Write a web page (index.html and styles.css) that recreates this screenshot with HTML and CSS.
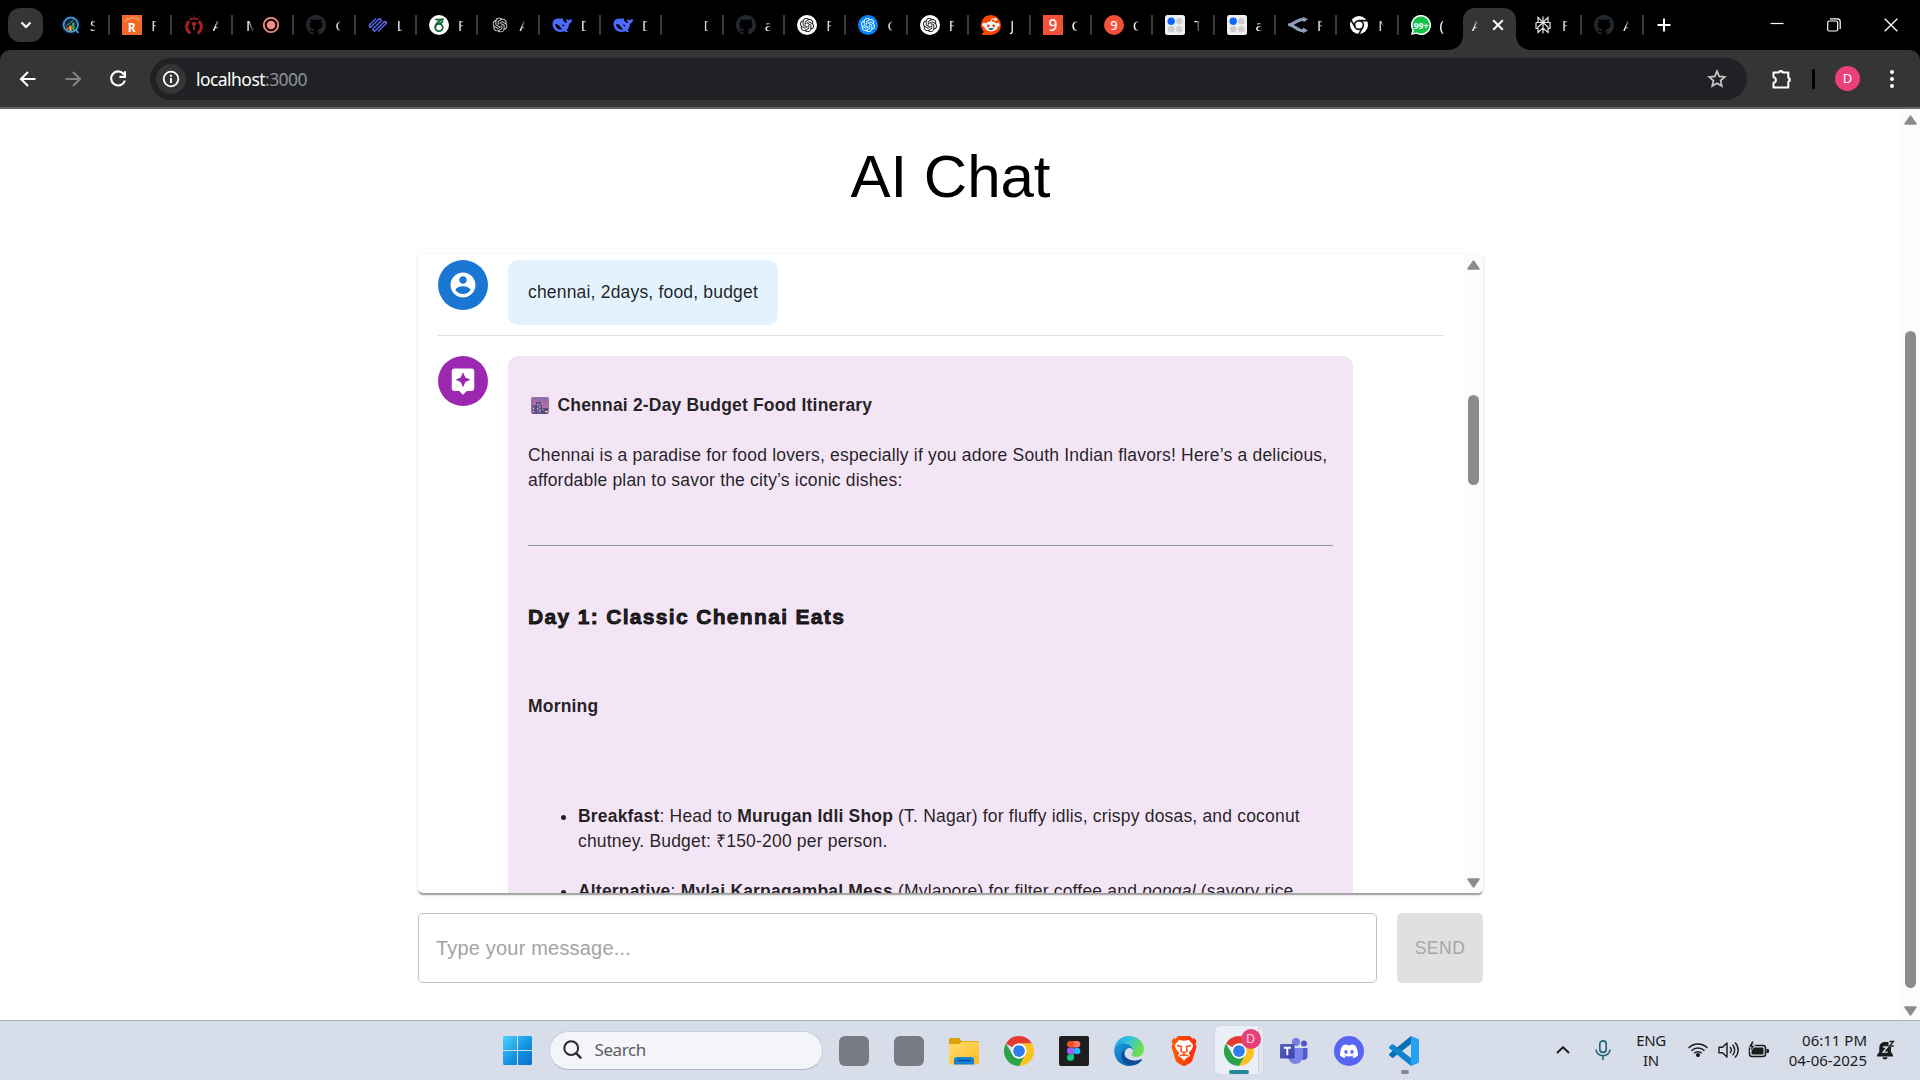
FILE: index.html
```html
<!DOCTYPE html>
<html lang="en">
<head>
<meta charset="utf-8">
<title>AI Chat</title>
<link rel="stylesheet" href="styles.css">
</head>
<body>
<svg class="defs" width="0" height="0">
  <defs>
    <linearGradient id="win" x1="0" y1="0" x2="1" y2="1"><stop offset="0" stop-color="#4cd2ff"/><stop offset=".55" stop-color="#1593e0"/><stop offset="1" stop-color="#0a6fd0"/></linearGradient>
    <linearGradient id="folder" x1="0" y1="0" x2="1" y2="1"><stop offset="0" stop-color="#ffdc6e"/><stop offset="1" stop-color="#fbbd22"/></linearGradient>
    <linearGradient id="edgeTop" x1="0" y1="0" x2="1" y2=".4"><stop offset="0" stop-color="#1f9fe8"/><stop offset=".5" stop-color="#33c3dc"/><stop offset="1" stop-color="#6ee04a"/></linearGradient>
    <linearGradient id="edgeLow" x1="0" y1="0" x2="1" y2="1"><stop offset="0" stop-color="#1b9de2"/><stop offset="1" stop-color="#0c4f9c"/></linearGradient>
    <linearGradient id="brave" x1="0" y1="0" x2="1" y2="0"><stop offset="0" stop-color="#ff5b00"/><stop offset="1" stop-color="#ff2a0a"/></linearGradient>
    <linearGradient id="teams" x1="0" y1="0" x2="1" y2="1"><stop offset="0" stop-color="#5a62c3"/><stop offset="1" stop-color="#3940ab"/></linearGradient>
    <linearGradient id="dusk" x1="0" y1="0" x2="0" y2="1"><stop offset="0" stop-color="#8f6dab"/><stop offset="1" stop-color="#c96f9f"/></linearGradient>
  </defs>
  <symbol id="github" viewBox="0 0 16 16"><path fill="#24292f" d="M8 0C3.58 0 0 3.58 0 8c0 3.54 2.29 6.53 5.47 7.59.4.07.55-.17.55-.38 0-.19-.01-.82-.01-1.49-2.01.37-2.53-.49-2.69-.94-.09-.23-.48-.94-.82-1.13-.28-.15-.68-.52-.01-.53.63-.01 1.08.58 1.23.82.72 1.21 1.87.87 2.33.66.07-.52.28-.87.51-1.07-1.78-.2-3.64-.89-3.64-3.95 0-.87.31-1.59.82-2.15-.08-.2-.36-1.02.08-2.12 0 0 .67-.21 2.2.82.64-.18 1.32-.27 2-.27s1.36.09 2 .27c1.53-1.04 2.2-.82 2.2-.82.44 1.1.16 1.92.08 2.12.51.56.82 1.27.82 2.15 0 3.07-1.87 3.75-3.65 3.95.29.25.54.73.54 1.48 0 1.07-.01 1.93-.01 2.2 0 .21.15.46.55.38A8.01 8.01 0 0016 8c0-4.42-3.58-8-8-8z"/></symbol>
  <symbol id="openai" viewBox="0 0 24 24"><path fill="currentColor" d="M22.2819 9.8211a5.9847 5.9847 0 0 0-.5157-4.9108 6.0462 6.0462 0 0 0-6.5098-2.9A6.0651 6.0651 0 0 0 4.9807 4.1818a5.9847 5.9847 0 0 0-3.9977 2.9 6.0462 6.0462 0 0 0 .7427 7.0966 5.98 5.98 0 0 0 .511 4.9107 6.051 6.051 0 0 0 6.5146 2.9001A5.9847 5.9847 0 0 0 13.2599 24a6.0557 6.0557 0 0 0 5.7718-4.2058 5.9894 5.9894 0 0 0 3.9977-2.9001 6.0557 6.0557 0 0 0-.7475-7.0729zm-9.022 12.6081a4.4755 4.4755 0 0 1-2.8764-1.0408l.1419-.0804 4.7783-2.7582a.7948.7948 0 0 0 .3927-.6813v-6.7369l2.02 1.1686a.071.071 0 0 1 .038.052v5.5826a4.504 4.504 0 0 1-4.4945 4.4944zm-9.6607-4.1254a4.4708 4.4708 0 0 1-.5346-3.0137l.142.0852 4.783 2.7582a.7712.7712 0 0 0 .7806 0l5.8428-3.3685v2.3324a.0804.0804 0 0 1-.0332.0615L9.74 19.9502a4.4992 4.4992 0 0 1-6.1408-1.6464zM2.3408 7.8956a4.485 4.485 0 0 1 2.3655-1.9728V11.6a.7664.7664 0 0 0 .3879.6765l5.8144 3.3543-2.0201 1.1685a.0757.0757 0 0 1-.071 0l-4.8303-2.7865A4.504 4.504 0 0 1 2.3408 7.872zm16.5963 3.8558L13.1038 8.364 15.1192 7.2a.0757.0757 0 0 1 .071 0l4.8303 2.7913a4.4944 4.4944 0 0 1-.6765 8.1042v-5.6772a.79.79 0 0 0-.407-.667zm2.0107-3.0231l-.142-.0852-4.7735-2.7818a.7759.7759 0 0 0-.7854 0L9.409 9.2297V6.8974a.0662.0662 0 0 1 .0284-.0615l4.8303-2.7866a4.4992 4.4992 0 0 1 6.6802 4.66zM8.3065 12.863l-2.02-1.1638a.0804.0804 0 0 1-.038-.0567V6.0742a4.4992 4.4992 0 0 1 7.3757-3.4537l-.142.0805L8.704 5.459a.7948.7948 0 0 0-.3927.6813zm1.0976-2.3654l2.602-1.4998 2.6069 1.4998v2.9994l-2.5974 1.4997-2.6067-1.4997Z"/></symbol>
  <symbol id="deepseek" viewBox="0 0 20 20"><path fill="#4d6bfe" d="M1 6.5C2 4 5 3.300 8 3.700c1.200.1 2-.9 3-.3-.6 1.600.5 2.400 1.700 3.600.9 1 1.800 1.500 2.200.2-.6-1.400-1-2.200-.6-3.300.9.700 1.500 1.300 2.600 1.200 1.100-.1 2-.9 3.100-.7-.1 1.800-.7 3.300-2.400 4-.7.500-.5 1.500-.8 2.600-.4 1.700-1.200 3-2.300 4.200.6.700 1 1 1.700 1.200-1.500.9-2.700.7-4-.1-4 1.700-8.500.7-10.600-3C.4 11.200.2 8.700 1 6.500z"/><path fill="#000" d="M3.200 9c2-.3 3.500.9 4.700 2.800.8 1.200 1.500 2 2.500 2.600-3.700.6-6.900-1.200-7.200-5.400zM10 9.200c1.400.1 2.400 1.100 2.200 2.600-1-.3-1.900-1.100-2.200-2.600z"/></symbol>
  <symbol id="dots" viewBox="0 0 20 20"><rect width="20" height="20" rx="2.500" fill="#f1f0f0"/><circle cx="6.200" cy="6.200" r="3.700" fill="#0d66ff"/><circle cx="14.300" cy="6.200" r="3.300" fill="#d0cfcf"/><circle cx="6.200" cy="14.300" r="3.300" fill="#d0cfcf"/><circle cx="14.300" cy="14.300" r="3.300" fill="#d0cfcf"/></symbol>
  <symbol id="chrome" viewBox="0 0 48 48"><path fill="#e33b2e" d="M24 0a24 24 0 0 1 20.800 12H24a12 12 0 0 0-10.400 6L3.200 12A24 24 0 0 1 24 0z"/><path fill="#fcc31e" d="M44.800 12A24 24 0 0 1 24 48l10.400-18A12 12 0 0 0 34.400 18 12 12 0 0 0 24 12z"/><path fill="#2da24c" d="M3.200 12A24 24 0 0 0 24 48l10.400-18a12 12 0 0 1-20.800 0z"/><circle cx="24" cy="24" r="12" fill="#fff"/><circle cx="24" cy="24" r="9.400" fill="#2f7de9"/></symbol>
  <symbol id="up" viewBox="0 0 13 10"><path d="M6.500 1.200 11.800 8.800H1.200z" fill="#8b8b8b" stroke="#8b8b8b" stroke-width="1.800" stroke-linejoin="round"/></symbol>
</svg>

<header class="tabstrip">
  <button class="tab-search"><svg width="12" height="8" viewBox="0 0 12 8"><path d="M1.500 1.500 6 6l4.500-4.500" fill="none" stroke="#fff" stroke-width="2.200"/></svg></button>
  <nav class="tabs">
    <div class="tab"><svg class="fav" viewBox="0 0 20 20"><circle cx="10" cy="10" r="10" fill="#04122c"/><circle cx="9.800" cy="9.800" r="7.200" fill="#0b2547" stroke="#4fa8dd" stroke-width="1.500"/><path d="M14.500 14.500 17.500 18" stroke="#4fa8dd" stroke-width="1.600"/><path fill="#e2482d" d="M5.500 12h2.300v3.500H5.500z"/><path fill="#f2b53a" d="M8.300 10.500h2.300V16H8.300z"/><path fill="#3fae4e" d="M11.200 7.500h2.300v7.500h-2.300z"/><path d="M5 11 12.500 5" stroke="#8fd36a" stroke-width=".7"/></svg><span class="ttl">S</span></div>
    <div class="tab"><svg class="fav" viewBox="0 0 20 20"><rect width="20" height="20" fill="#f26a25"/><path d="M3 6.500C6 3.500 9 2.800 11 2.800S15 3 18 6" fill="none" stroke="#f9ba94" stroke-width="2" stroke-dasharray=".8 .9"/><text x="9.700" y="16.500" font-family="Open Sans, sans-serif" font-weight="700" font-size="12" text-anchor="middle" fill="#fff">R</text></svg><span class="ttl">F</span></div>
    <div class="tab"><svg class="fav" viewBox="0 0 20 20" fill="none" stroke="#a9201f"><path d="M6.500 18.200C1.800 16 1.300 9 5.500 6.200M13.500 18.200c4.700-2.200 5.200-9.200 1-12" stroke-width="2.800"/><path d="M10 9v6" stroke-width="1.800"/><circle cx="10" cy="9" r="1.800" fill="#b32624"/><path d="M6 4.500C8.500 3.200 11.500 3.200 14 4.500" stroke-width="1.500"/><path d="M10 0v2.500M5 1.500l1 2M15 1.500l-1 2M1 6l2 1.500M19 6l-2 1.500M0 12h2M20 12h-2" stroke="#671413"/></svg><span class="ttl">A</span></div>
    <div class="tab tab-rec"><span class="ttl">M</span><svg class="fav" viewBox="0 0 20 20"><circle cx="10" cy="10" r="7.200" fill="none" stroke="#f28b82" stroke-width="1.800"/><circle cx="10" cy="10" r="4.300" fill="#f28b82"/></svg></div>
    <div class="tab"><svg class="fav"><use href="#github"/></svg><span class="ttl">G</span></div>
    <div class="tab"><svg class="fav" viewBox="0 0 20 20" fill="none" stroke="#4b5fd6" stroke-width="1.700" stroke-linecap="round"><path d="M2 9.500 7.500 4M2.500 12.500 10.500 4.500M5 14 13 6M7.500 15.500 15.500 7.500M10.500 16 18 8.500"/><path d="M2 9.500c-1 1-.3 2.500.8 2.700M10.500 4.500c1-1.500 3-.5 2.500 1.500M15.500 7.500c1.500-1.500 3.800-.5 2.500 1M5 14c0 1.800 1.500 2.500 2.500 1.500" stroke="#5b62cc"/></svg><span class="ttl">L</span></div>
    <div class="tab"><svg class="fav" viewBox="0 0 20 20"><circle cx="10" cy="10" r="10" fill="#fff"/><g fill="none" stroke="#13693c" stroke-width="1.800" stroke-linecap="round"><ellipse cx="10" cy="12.500" rx="3.700" ry="3.600"/><path d="M6.300 12.500C6.300 8.500 9 6 14 4.500M7 4.600c2.200 0 4 .4 7-.4M9.500 8.300c2 .2 3.400-.5 4-1.500"/></g></svg><span class="ttl">F</span></div>
    <div class="tab"><svg class="fav ai-plain" viewBox="-4 -4 32 32"><use href="#openai" width="24" height="24"/></svg><span class="ttl">A</span></div>
    <div class="tab"><svg class="fav"><use href="#deepseek"/></svg><span class="ttl">D</span></div>
    <div class="tab"><svg class="fav"><use href="#deepseek"/></svg><span class="ttl">D</span></div>
    <div class="tab"><span class="fav"></span><span class="ttl">D</span></div>
    <div class="tab"><svg class="fav"><use href="#github"/></svg><span class="ttl">a</span></div>
    <div class="tab"><svg class="fav ai-white" viewBox="-5 -5 34 34"><use href="#openai" width="24" height="24"/></svg><span class="ttl">F</span></div>
    <div class="tab"><svg class="fav ai-blue" viewBox="-5 -5 34 34"><use href="#openai" width="24" height="24"/></svg><span class="ttl">C</span></div>
    <div class="tab"><svg class="fav ai-white" viewBox="-5 -5 34 34"><use href="#openai" width="24" height="24"/></svg><span class="ttl">F</span></div>
    <div class="tab"><svg class="fav" viewBox="0 0 20 20"><path fill="#ff4500" d="M10 0a10 10 0 1 1 0 20H1.300c-.6 0-.8-.6-.4-1l2-2A10 10 0 0 1 10 0z"/><path d="M10 7 11 3.800l3 .6" stroke="#fff" stroke-width="1" fill="none"/><circle cx="14.600" cy="4.400" r="1.500" fill="#fff"/><circle cx="3.300" cy="9.800" r="2" fill="#fff"/><circle cx="16.700" cy="9.800" r="2" fill="#fff"/><ellipse cx="10" cy="11.500" rx="6.700" ry="5" fill="#f1f7fa"/><circle cx="7.300" cy="10.800" r="1.400" fill="#e8401a"/><circle cx="12.700" cy="10.800" r="1.400" fill="#e8401a"/><path d="M7.300 13.300h5.400c-.4 2.300-5 2.300-5.400 0z" fill="#263238"/></svg><span class="ttl">J</span></div>
    <div class="tab"><svg class="fav" viewBox="0 0 20 20"><rect width="20" height="20" fill="#f5503a"/><text x="10" y="16" font-family="Noto Sans, sans-serif" font-size="15.500" font-weight="500" text-anchor="middle" fill="#fff">9</text></svg><span class="ttl">C</span></div>
    <div class="tab"><svg class="fav" viewBox="0 0 20 20"><circle cx="10" cy="10" r="10" fill="#f5503a"/><text x="10" y="14.800" font-family="Noto Sans, sans-serif" font-size="13" font-weight="500" text-anchor="middle" fill="#fff">9</text></svg><span class="ttl">C</span></div>
    <div class="tab"><svg class="fav"><use href="#dots"/></svg><span class="ttl">T</span></div>
    <div class="tab"><svg class="fav"><use href="#dots"/></svg><span class="ttl">a</span></div>
    <div class="tab"><svg class="fav" viewBox="0 0 20 20" fill="none" stroke="#8d9db8" stroke-width="3.200"><path d="M16.500 4.500C11 3 7.500 8.300 2 9.700 7.500 11.500 11 17 16.500 15.500"/><path d="m15 1.800 5 2.400-4.500 3zM15 12.500l5 3-5 2.700z" fill="#8d9db8" stroke="none"/></svg><span class="ttl">F</span></div>
    <div class="tab"><svg class="fav" viewBox="0 0 20 20"><circle cx="10" cy="10" r="9" fill="#fff"/><circle cx="10" cy="10" r="4.400" fill="none" stroke="#111" stroke-width="1.600"/><path d="M10 5.600h8.500M6.200 12.200 2 5M13.800 12.200 9.700 19.500" stroke="#111" stroke-width="1.600"/></svg><span class="ttl">N</span></div>
    <div class="tab"><svg class="fav" viewBox="0 0 20 20"><path fill="#fff" d="M10 0a10 10 0 1 1-4.700 18.800L0 20l1.300-5A10 10 0 0 1 10 0z"/><path fill="#12c34a" d="M10 1.600a8.500 8.500 0 1 1-4.500 15.700L2 18.200l1-3.300A8.500 8.500 0 0 1 10 1.600z"/><text x="10" y="13.700" font-family="Open Sans, sans-serif" font-size="9.500" font-weight="700" text-anchor="middle" textLength="14.500" lengthAdjust="spacingAndGlyphs" fill="#fff">99+</text></svg><span class="ttl">(</span></div>
    <div class="tab tab-active"><span class="ttl">A</span><svg width="12" height="12" viewBox="0 0 12 12"><path d="m1.200 1.200 9.600 9.600m0-9.600-9.600 9.600" stroke="#fff" stroke-width="2"/></svg></div>
    <div class="tab"><svg class="fav" viewBox="0 0 20 20" fill="none" stroke="#e6e6e2" stroke-width="1.200"><path d="M10 1.500v17M5 2.500l5 5 5-5v5H5zM3 7.500h14v6h-2M5 13.500H3v-6M10 7.500 5 12v5.500l5-4.500 5 4.500V12z"/></svg><span class="ttl">F</span></div>
    <div class="tab"><svg class="fav"><use href="#github"/></svg><span class="ttl">A</span></div>
  </nav>
  <button class="new-tab"><svg width="14" height="14" viewBox="0 0 14 14"><path d="M7 .5v13M.5 7h13" stroke="#fff" stroke-width="2.100"/></svg></button>
  <div class="win-controls">
    <svg width="14" height="14" viewBox="0 0 14 14"><path d="M.5 5.500h13" stroke="#fff" stroke-width="1.200"/></svg>
    <svg width="14" height="14" viewBox="0 0 14 14" fill="none" stroke="#fff" stroke-width="1.200"><rect x=".7" y="3" width="10" height="10" rx="1.500"/><path d="M3 .8h7.500a2.700 2.700 0 0 1 2.700 2.700V11"/></svg>
    <svg width="14" height="14" viewBox="0 0 14 14"><path d="m.7.7 12.600 12.600m0-12.600L.7 13.300" stroke="#fff" stroke-width="1.300"/></svg>
  </div>
</header>

<div class="toolbar">
  <div class="nav-buttons">
    <svg width="20" height="20" viewBox="0 0 20 20" fill="none" stroke="#fff" stroke-width="2.100"><path d="M17.500 10H3.500M10 3 3 10l7 7"/></svg>
    <svg width="20" height="20" viewBox="0 0 20 20" fill="none" stroke="#818181" stroke-width="2.100"><path d="M2.500 10h14M10 3l7 7-7 7"/></svg>
    <svg width="20" height="20" viewBox="0 0 20 20" fill="none" stroke="#fff" stroke-width="2.100"><path d="M16.200 5.800A7 7 0 1 0 16.900 11.500M17 2.300v5.600h-5.600"/></svg>
  </div>
  <div class="omnibox">
    <span class="site-info"><svg width="18" height="18" viewBox="0 0 18 18"><circle cx="9" cy="9" r="7.300" fill="none" stroke="#fff" stroke-width="1.800"/><path d="M9 8v5M9 4.800v1.900" stroke="#fff" stroke-width="1.900"/></svg></span>
    <span class="url">localhost<span class="port">:3000</span></span>
    <svg class="star" width="20" height="20" viewBox="0 0 20 20"><path d="m10 2.200 2.200 5.200 5.600.5-4.200 3.700 1.200 5.500L10 14.200l-4.800 2.900 1.200-5.500L2.200 7.900l5.600-.5z" fill="none" stroke="#c7c7c7" stroke-width="1.700"/></svg>
  </div>
  <svg class="ext" width="22" height="22" viewBox="0 0 22 22"><path d="M3.500 4.500H7.500a2.500 2.500 0 0 1 4.600 0h5.200v5.200a2.200 2.200 0 0 1 0 4.200v5.600H2.500v-4.700c3.200-.5 3.200-5 0-5.500V4.500z" fill="none" stroke="#fff" stroke-width="2" stroke-linejoin="round"/><path d="M8.500 4a1.500 1.500 0 0 1 2.800 0zM18 10.500a1.500 1.500 0 0 1 0 2.800z" stroke="#fff" fill="#fff"/></svg>
  <span class="bar"></span>
  <span class="profile">D</span>
  <svg class="kebab" width="6" height="20" viewBox="0 0 6 20" fill="#fff"><circle cx="3" cy="3" r="2"/><circle cx="3" cy="10" r="2"/><circle cx="3" cy="17" r="2"/></svg>
</div>

<div class="viewport">
  <main class="page">
    <h1>AI Chat</h1>
    <section class="paper">
      <div class="messages">
        <div class="message user">
          <span class="avatar blue"><svg width="30" height="30" viewBox="0 0 24 24" fill="#fff"><path d="M12 2C6.480 2 2 6.480 2 12s4.480 10 10 10 10-4.480 10-10S17.520 2 12 2zm0 3c1.660 0 3 1.340 3 3s-1.340 3-3 3-3-1.340-3-3 1.340-3 3-3zm0 14.200c-2.500 0-4.710-1.280-6-3.220.03-1.990 4-3.080 6-3.080 1.990 0 5.970 1.090 6 3.080-1.290 1.940-3.500 3.220-6 3.220z"/></svg></span>
          <div class="bubble">chennai, 2days, food, budget</div>
        </div>
        <div class="message bot">
          <span class="avatar purple"><svg width="30" height="30" viewBox="0 0 24 24" fill="#fff"><path d="M19 2H5c-1.110 0-2 .9-2 2v14c0 1.100.89 2 2 2h4l3 3 3-3h4c1.100 0 2-.9 2-2V4c0-1.100-.9-2-2-2zm-5.120 10.880L12 17l-1.880-4.120L6 11l4.120-1.880L12 5l1.880 4.120L18 11l-4.120 1.880z"/></svg></span>
          <div class="bubble">
            <p class="intro"><svg class="city" width="18" height="17" viewBox="0 0 18 17"><rect width="18" height="17" rx="2" fill="url(#dusk)"/><path fill="#584a86" d="M1 17V8h4V5h5v3h1v3h6v6z"/><path fill="#6b5a9c" d="M1 8h3v9H1zM6 6h4v11H6z"/><path fill="#f0d86c" d="M2 11h1v1H2zM2 14h1v1H2zM6 7h1.200v1.200H6zM8.300 9h1.200v1.200H8.300zM6 11h1.200v1.200H6zM8.300 13h1.200v1.200H8.300zM11.500 12h1v1h-1zM14 14h3v1.200h-3z"/></svg><strong>Chennai 2-Day Budget Food Itinerary</strong></p>
            <p class="lead">Chennai is a paradise for food lovers, especially if you adore South Indian flavors! Here’s a delicious, affordable plan to savor the city’s iconic dishes:</p>
            <hr>
            <h3>Day 1: Classic Chennai Eats</h3>
            <h4>Morning</h4>
            <ul>
              <li><strong>Breakfast</strong>: Head to <strong>Murugan Idli Shop</strong> (T. Nagar) for fluffy idlis, crispy dosas, and coconut chutney. Budget: ₹150-200 per person.</li>
              <li><strong>Alternative</strong>: <strong>Mylai Karpagambal Mess</strong> (Mylapore) for filter coffee and <em>pongal</em> (savory rice</li>
            </ul>
          </div>
        </div>
      </div>
      <div class="scroll chat-scroll"><svg width="13" height="10"><use href="#up"/></svg><span class="thumb"></span><svg class="flip" width="13" height="10"><use href="#up"/></svg></div>
    </section>
    <form class="composer">
      <input type="text" placeholder="Type your message...">
      <button type="button" disabled>SEND</button>
    </form>
  </main>
  <div class="scroll page-scroll"><svg width="13" height="10"><use href="#up"/></svg><span class="thumb"></span><svg class="flip" width="13" height="10"><use href="#up"/></svg></div>
</div>

<footer class="taskbar">
  <svg class="start" width="29" height="29" viewBox="0 0 29 29"><path fill="url(#win)" d="M1.500 0H14v14H0V1.500A1.500 1.500 0 0 1 1.500 0zM15 0h12.500A1.500 1.500 0 0 1 29 1.500V14H15zM0 15h14v14H1.500A1.500 1.500 0 0 1 0 27.500zM15 15h14v12.500a1.500 1.500 0 0 1-1.500 1.500H15z"/></svg>
  <div class="search"><svg width="19" height="19" viewBox="0 0 19 19"><circle cx="8.200" cy="8.200" r="6.900" fill="none" stroke="#2a2a2c" stroke-width="2"/><path d="m13 13 4.500 4.700" stroke="#2a2a2c" stroke-width="2.400" stroke-linecap="round"/></svg><span>Search</span></div>
  <div class="apps">
    <div class="app"><span class="blank"></span></div>
    <div class="app"><span class="blank"></span></div>
    <div class="app"><svg width="30" height="30" viewBox="0 0 30 30"><path fill="#dd9f0c" d="M0 3.500C0 2.600.7 2 1.500 2H10l2.500 3H28c1.200 0 2 .8 2 2v3H0z"/><path fill="url(#folder)" d="M0 8h10l3-2.200h17V27a1.500 1.500 0 0 1-1.500 1.500h-27A1.500 1.500 0 0 1 0 27z"/><path fill="#1580d0" d="M5 28.500V24a3 3 0 0 1 3-3h14a3 3 0 0 1 3 3v4.500z"/><path stroke="#0a4c92" stroke-width="1.200" d="M8.500 24.500h13"/></svg></div>
    <div class="app"><svg width="30" height="30"><use href="#chrome"/></svg></div>
    <div class="app"><svg width="30" height="30" viewBox="0 0 30 30"><rect width="30" height="30" rx="2" fill="#1e1e1e"/><path fill="#f24e1e" d="M15 5h-3.700a3.300 3.300 0 0 0 0 6.600H15z"/><path fill="#ff7262" d="M15 5h3a3.300 3.300 0 0 1 0 6.600h-3z"/><path fill="#a259ff" d="M15 11.600h-3.700a3.300 3.300 0 0 0 0 6.600H15z"/><circle cx="18" cy="15" r="3.300" fill="#1abcfe"/><path fill="#0acf83" d="M8 21.500a3.300 3.300 0 0 1 3.300-3.300H15v3a3.500 3.500 0 0 1-7 .3z"/></svg></div>
    <div class="app"><svg width="30" height="30" viewBox="0 0 30 30"><path fill="url(#edgeTop)" d="M.3 12.500C1.500 5 7.500 0 15 0c8.500 0 15 6 15 13 0 5-3.500 8-8 8-3 0-4.500-1-4.500-2.200 0-.8 1.500-1.500 1.500-4C19 10 14 6.800 9 7 5 7.200 2 9.500.3 12.500z"/><path fill="url(#edgeLow)" d="M.3 12.500C2 9 5.500 7 9 7c5 0 9.500 3 10 7-1-1.500-2.500-2.300-4.300-2-5 1-7.700 11 5.300 12.700 3 .3 5.500-.6 7-1.400.8-.4 1.200.2.8.8C25.300 27.800 20.500 30 15 30 6.500 30-.8 23 .3 12.500z"/><path fill="#0c4d98" d="M12 13c-3.500 3.500-3 11 8 11.700 3 .3 5.500-.6 7-1.400.8-.4 1.200.2.8.8C21.500 33 7 29.500 7.500 19.500c.1-3 2-5.500 4.500-6.500z"/></svg></div>
    <div class="app"><svg width="30" height="30" viewBox="0 0 30 30"><path fill="url(#brave)" d="M9 0h12l2.500 2.800 2-.5 2 3-1 2.500 1 3-4 13.200c-.5 1.500-1.500 2.300-2.500 3L15 30.500 9 27c-1-.7-2-1.500-2.500-3L2.500 10.800l1-3-1-2.500 2-3 2 .5z"/><path fill="#fff" d="m10 4 5 .8 5-.8 4.300 5-1 3.500-3.600 4.500 1.500 3-4 2-2.200 3-2.200-3-4-2 1.500-3-3.600-4.500-1-3.500z"/><path fill="none" stroke="#ff4208" stroke-width="1.400" d="m8 9.500 4.500 1-.7 4.300L15 17l3.200-2.200-.7-4.300 4.500-1M15 17v3.500m-4.500-.7L15 18.500l4.500 1.300"/></svg></div>
    <div class="app current"><svg width="30" height="30"><use href="#chrome"/></svg><span class="badge">D</span><span class="mark"></span></div>
    <div class="app"><svg width="30" height="30" viewBox="0 0 30 30"><circle cx="17" cy="6" r="4" fill="#767ce4"/><circle cx="25" cy="7.500" r="3" fill="#5059c9"/><path fill="#5059c9" d="M20 12h8.500v8c0 3-2.500 4.500-5 4z"/><path fill="#7b83eb" d="M9 12h15v8.500a7.500 7.500 0 0 1-15 0z"/><rect x="1" y="8" width="14.500" height="14.500" rx="1" fill="url(#teams)"/><path d="M4.800 11.700h7M8.300 12v7.300" stroke="#fff" stroke-width="1.900"/></svg></div>
    <div class="app"><svg width="30" height="30" viewBox="-8 -8 40 40"><circle cx="12" cy="12" r="20" fill="#5865f2"/><path transform="translate(0 .3)" fill="#fff" d="M20.317 4.370a19.791 19.791 0 00-4.885-1.515.074.074 0 00-.079.037c-.211.375-.445.865-.608 1.250-1.845-.276-3.680-.276-5.487 0-.164-.393-.406-.874-.618-1.250a.077.077 0 00-.079-.037 19.736 19.736 0 00-4.885 1.515.07.07 0 00-.032.028C.533 9.046-.319 13.580.099 18.058a.082.082 0 00.031.056c2.053 1.508 4.041 2.423 5.993 3.029a.078.078 0 00.084-.028c.462-.63.873-1.295 1.226-1.994a.076.076 0 00-.042-.106c-.653-.248-1.274-.55-1.872-.892a.077.077 0 01-.008-.128c.126-.094.252-.192.372-.291a.074.074 0 01.078-.011c3.928 1.793 8.180 1.793 12.061 0a.074.074 0 01.079.01c.12.099.246.198.373.292a.077.077 0 01-.007.128 12.299 12.299 0 01-1.873.891.077.077 0 00-.041.107c.36.698.772 1.363 1.225 1.993a.076.076 0 00.084.029c1.961-.607 3.950-1.522 6.002-3.029a.077.077 0 00.031-.055c.5-5.177-.838-9.674-3.549-13.660a.061.061 0 00-.031-.029zM8.020 15.331c-1.183 0-2.157-1.086-2.157-2.419 0-1.333.956-2.419 2.157-2.419 1.211 0 2.176 1.095 2.157 2.419 0 1.333-.956 2.419-2.157 2.419zm7.975 0c-1.183 0-2.157-1.086-2.157-2.419 0-1.333.955-2.419 2.157-2.419 1.211 0 2.176 1.095 2.157 2.419 0 1.333-.946 2.419-2.157 2.419z"/></svg></div>
    <div class="app"><svg width="30" height="30" viewBox="0 0 30 30"><path fill="#0b6fb8" d="M22 0v8L4.500 21.500c-.6.500-1.300.5-1.800 0L.5 19.600c-.6-.5-.6-1.400 0-2z"/><path fill="#1083cf" d="M22 30v-8L4.500 8.500c-.6-.5-1.300-.5-1.800 0L.5 10.400c-.6.500-.6 1.400 0 2z"/><path fill="#27a2f0" d="M22 0l6.800 2.800c.7.300 1.200 1 1.200 1.800v20.800c0 .8-.5 1.500-1.200 1.800L22 30z"/></svg><span class="mark idle"></span></div>
  </div>
  <div class="tray">
    <svg width="14" height="8" viewBox="0 0 14 8"><path d="m1 7 6-5.800L13 7" fill="none" stroke="#1b1b1d" stroke-width="1.900"/></svg>
    <svg class="mic" width="16" height="20" viewBox="0 0 16 20" fill="none" stroke="#226173" stroke-width="1.600"><rect x="4.800" y=".9" width="6.400" height="11.500" rx="3.200"/><path d="M1 9.500a7 6.200 0 0 0 14 0M8 15.800V20"/></svg>
    <div class="lang"><span>ENG</span><span>IN</span></div>
    <svg class="wifi" width="20" height="15" viewBox="0 0 20 15" fill="none" stroke="#1b1b1d" stroke-width="1.500"><path d="M.7 6a13 13 0 0 1 18.600 0M3.500 8.700a9.300 9.300 0 0 1 13 0M6.200 11.300a5.500 5.500 0 0 1 7.600 0"/><circle cx="10" cy="13" r="1.300" fill="#1b1b1d"/></svg>
    <svg class="vol" width="21" height="18" viewBox="0 0 21 18" fill="none" stroke="#1b1b1d" stroke-width="1.400"><path d="M1 6.300h3.500L9 2v14l-4.500-4.300H1z" stroke-linejoin="round"/><path d="M12 6a4.500 4.500 0 0 1 0 6M14.500 3.700a7.500 7.500 0 0 1 0 10.600M17 1.500a10.500 10.500 0 0 1 0 15"/></svg>
    <svg class="bat" width="21" height="17" viewBox="0 0 21 17"><rect x="1.500" y="4.500" width="16" height="11" rx="2.500" fill="none" stroke="#1b1b1d" stroke-width="1.500"/><rect x="3.500" y="6.500" width="12" height="7" rx="1" fill="#1b1b1d"/><path fill="#1b1b1d" d="M18.500 8h1.200c.7 0 1.300.6 1.300 1.300v1.400c0 .7-.6 1.300-1.300 1.300h-1.200z"/><path d="M4 0 .5 6H3l-.8 5L7 4.500H4.500L6 0z" fill="#1b1b1d" stroke="#d8ddea" stroke-width=".8"/></svg>
    <div class="clock"><span>06:11 PM</span><span>04-06-2025</span></div>
    <svg class="bell" width="18" height="20" viewBox="0 0 18 20"><path fill="#1b1b1d" d="M8 2C4.300 2 2.300 4.500 2.300 8v4L0 15v1.500h16V15l-2-3V2zM5.500 17.300h5a2.500 2.200 0 0 1-5 0z"/><path d="M6 7h4.500L6 12.200h4.800" fill="none" stroke="#d8ddea" stroke-width="1.300"/><path d="M11.500 1h6v6h-6z" fill="#d8ddea"/><path d="M12.500 1.500h4L12.500 6h4.300" fill="none" stroke="#1b1b1d" stroke-width="1.300"/></svg>
  </div>
</footer>
</body>
</html>
```
FILE: styles.css
```css
* { box-sizing: border-box; }

body {
  margin: 0;
  width: 1920px;
  height: 1080px;
  overflow: hidden;
  display: grid;
  grid-template-rows: 50px 59px 911px 60px;
  background: #000;
  font-family: "Liberation Sans", Arial, sans-serif;
}

.defs { position: absolute; }
svg { display: block; flex: none; }
button { border: 0; padding: 0; margin: 0; background: none; font: inherit; }

/* Tab strip */
.tabstrip { display: flex; align-items: flex-start; background: #000; }
.tab-search {
  width: 35px; height: 34px; margin: 8px 6px 0 8px; border-radius: 12px;
  background: #353535; display: grid; place-items: center;
}
.tabs { display: flex; height: 50px; }
.tab {
  width: 61.35px; flex: none; display: flex; align-items: center; gap: 9px;
  padding: 0 0 0 12px;
  background: linear-gradient(#3a3a3a, #3a3a3a) no-repeat right 0 top 15px / 2px 20px;
}
.tab:nth-child(23) { background: none; }
.fav { width: 20px; height: 20px; flex: none; }
.ttl {
  width: 6px; overflow: hidden; color: #fff;
  font: 15px/20px "Noto Sans", sans-serif;
  -webkit-mask: linear-gradient(90deg, #000 30%, transparent);
  mask: linear-gradient(90deg, #000 30%, transparent);
}
.tab-rec { padding-left: 13px; gap: 7px; }
.tab-rec .ttl { width: 8px; }
.ai-plain { color: #ddd; }
.ai-white { color: #111; background: #fff; border-radius: 50%; }
.ai-blue { color: #fff; background: #0285ff; border-radius: 50%; }
.tab-active {
  position: relative; width: 53.5px; margin: 7.5px 4.5px 0 3px; padding-left: 9px; gap: 14px;
  padding-bottom: 7px; background: #353535; border-radius: 12px 12px 0 0;
}
.tab-active::before, .tab-active::after {
  content: ""; position: absolute; bottom: 0; width: 14px; height: 14px;
}
.tab-active::before { left: -14px; background: radial-gradient(circle at 0 0, transparent 13.5px, #353535 14px); }
.tab-active::after { right: -14px; background: radial-gradient(circle at 100% 0, transparent 13.5px, #353535 14px); }
.new-tab { margin: 18px 0 0 13px; }
.win-controls { display: flex; gap: 43px; margin: 18px 22px 0 auto; }

/* Toolbar */
.toolbar {
  display: flex; align-items: center; padding: 0 25px 0 18px;
  background: #353535; border-bottom: 2px solid #676464; border-radius: 10px 10px 0 0;
}
.nav-buttons { display: flex; gap: 25px; width: 132px; }
.omnibox {
  flex: none; width: 1597px; height: 42px; margin-top: 1px; border-radius: 21px; background: #202124;
  display: flex; align-items: center; padding: 0 20px 0 6px;
}
.site-info { width: 30px; height: 30px; border-radius: 50%; background: #353535; display: grid; place-items: center; }
.url { margin-left: 10px; color: #fff; font: 17.5px/24px "Noto Sans", sans-serif; letter-spacing: -0.55px; }
.port { color: #8f9296; }
.star { margin-left: auto; }
.ext { margin-left: 24px; }
.bar { width: 3px; height: 20px; border-radius: 1px; background: #000; margin-left: 19px; }
.profile {
  width: 25px; height: 25px; margin-left: 20px; border-radius: 50%; background: #ec407a; color: #fff;
  display: grid; place-items: center; font: 13px/25px "Noto Sans", sans-serif;
}
.kebab { margin-left: auto; }

/* Page */
.viewport { display: flex; background: #fff; overflow: hidden; }
.page { width: 1065px; margin: 0 auto; padding-top: 33px; }
h1 { margin: 0 0 42px; font-size: 60px; line-height: 70px; font-weight: 400; text-align: center; color: #000; }
.paper {
  height: 639px; display: flex; overflow: hidden; border-radius: 5px; background: #fff;
  box-shadow: 0 2.5px 1.25px -1.25px rgba(0,0,0,.2), 0 1.25px 1.25px rgba(0,0,0,.14), 0 1.25px 3.75px rgba(0,0,0,.12);
}
.messages { flex: 1; padding: 6px 20px 0; }
.message { display: flex; gap: 20px; align-items: flex-start; }
.user { padding-bottom: 10px; border-bottom: 1px solid #e0e0e0; margin-bottom: 20px; }
.avatar { width: 50px; height: 50px; flex: none; border-radius: 50%; display: grid; place-items: center; }
.blue { background: #1976d2; }
.purple { background: #9c27b0; }
.bubble {
  padding: 20px; border-radius: 10px; color: rgba(0,0,0,.87);
  font-size: 17.5px; line-height: 25px; letter-spacing: .1874px;
}
.user .bubble { background: #e3f2fd; }
.bot .bubble { background: #f3e5f5; width: 845px; }
.intro { display: flex; align-items: center; gap: 8.5px; margin: 17px 0 25px; padding-left: 3px; }
.lead { margin: 0 0 52px; }
hr { height: 1px; margin: 0; border: 0; background: #8f9891; }
h3 {
  margin: 58px 0 63.5px; font-size: 21px; line-height: 26px; font-weight: 700;
  letter-spacing: 1.33px; -webkit-text-stroke: .9px currentColor;
}
h4 { margin: 0; font-size: 17.5px; line-height: 25px; }
ul { margin: 85px 0 0; padding: 0 0 0 50px; }
li { margin-bottom: 25px; }

/* Scrollbars */
.scroll { flex: none; width: 19px; background: #fcfcfc; display: flex; flex-direction: column; align-items: center; }
.scroll .thumb { width: 11px; border-radius: 6px; background: #8b8b8b; }
.flip { transform: scaleY(-1); margin-top: auto; }
.chat-scroll { padding: 6px 0 5px; }
.chat-scroll .thumb { height: 90px; margin-top: 125px; }
.page-scroll { padding: 6px 0 4px; }
.page-scroll .thumb { height: 657px; margin-top: 206px; }

/* Composer */
.composer { display: flex; gap: 20px; margin-top: 20px; height: 70px; }
.composer input {
  flex: 1; border: 1px solid #c0c0c0; border-radius: 5px; padding: 0 17px; background: #fff; outline: 0;
  font: 20px/29px "Liberation Sans", Arial, sans-serif; letter-spacing: .1876px;
}
.composer input::placeholder { color: #a3a3a3; opacity: 1; }
.composer button {
  width: 86px; border-radius: 5px; background: #e0e0e0; color: #a6a6a6;
  font-size: 17.5px; letter-spacing: .5px;
}

/* Taskbar */
.taskbar {
  display: flex; align-items: center; padding-left: 503px; color: #1b1b1d;
  background: #d8ddea; border-top: 1px solid #a8adbb;
  font-family: "Noto Sans", sans-serif;
}
.search {
  width: 274px; height: 39px; margin-left: 17px; padding: 0 0 2px 13px; border-radius: 20px;
  background: #f3f5fa; border: 1px solid #c8cedd; border-bottom-color: #b0b6c6;
  display: flex; align-items: center; gap: 12.5px; font-size: 17px; letter-spacing: -.4px; color: #5c5d61;
}
.apps { display: flex; height: 59px; margin-left: 3.5px; }
.app { position: relative; width: 55px; display: grid; place-items: center; }
.blank { width: 30px; height: 30px; border-radius: 6px; background: #787b84; }
.current::before {
  content: ""; position: absolute; left: 3px; top: 5px; width: 48px; height: 48px; border-radius: 5px;
  background: linear-gradient(90deg, #ebeff7 43px, #cdd2e0 43px 44px, #e3e7f1 44px); box-shadow: 0 0 1px #b4b9c8;
}
.current svg { position: relative; }
.badge {
  position: absolute; left: 29px; top: 8px; width: 20px; height: 20px; border-radius: 50%;
  background: #e83e78; color: #fbd3e0; font: 12.5px/20px "Noto Sans", sans-serif; text-align: center;
}
.mark { position: absolute; bottom: 6px; left: 17.5px; width: 20px; height: 4px; border-radius: 2px; background: #23879a; }
.idle { left: 24px; width: 8px; background: #84868d; }
.tray { display: flex; align-items: center; margin-left: auto; padding: 0 25px 2px 0; }
.mic { margin-left: 25px; }
.lang, .clock { display: flex; flex-direction: column; font-size: 15px; line-height: 20px; letter-spacing: -.35px; }
.lang { align-items: center; width: 32px; margin-left: 24px; }
.wifi { margin-left: 21px; }
.vol { margin-left: 10px; }
.bat { margin-left: 9px; }
.clock { width: 80px; align-items: flex-end; margin-left: 18px; white-space: nowrap; letter-spacing: 0; }
.bell { margin-left: 10px; }
```
